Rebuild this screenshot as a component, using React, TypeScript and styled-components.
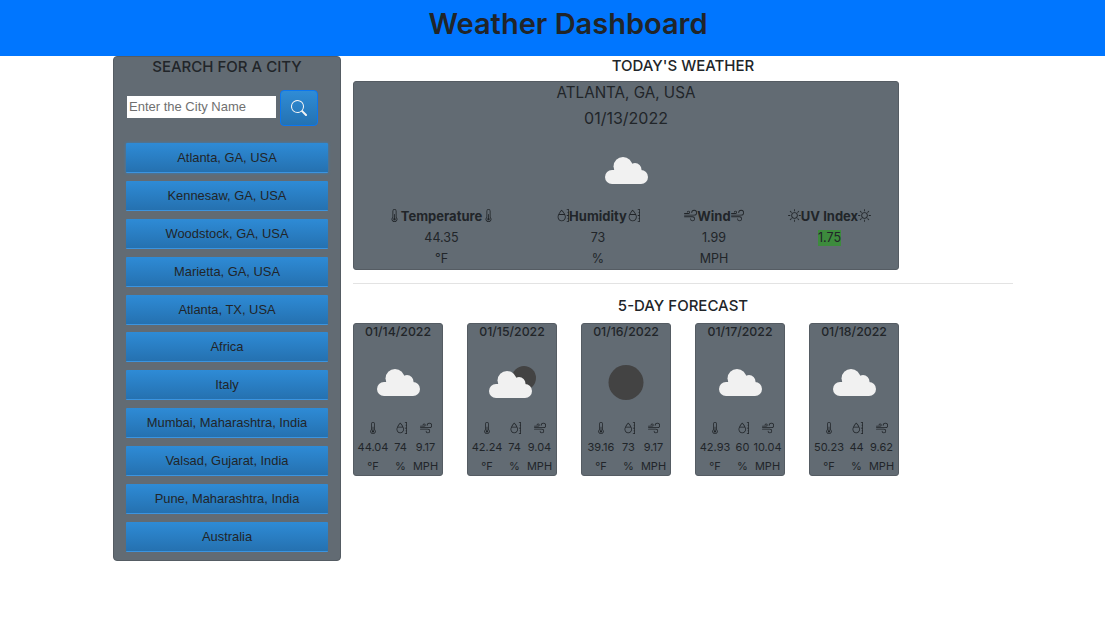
import styled, { createGlobalStyle } from "styled-components";
import {
  BsSearch,
  BsThermometerHalf,
  BsMoisture,
  BsWind,
  BsSun,
} from "react-icons/bs";

const GlobalStyle = createGlobalStyle`
  * { box-sizing: border-box; }
  html, body { margin: 0; padding: 0; background: #fff; }
  body {
    font-family: Inter, "Liberation Sans", sans-serif;
    color: #212529;
  }
`;

const cities = [
  "Atlanta, GA, USA",
  "Kennesaw, GA, USA",
  "Woodstock, GA, USA",
  "Marietta, GA, USA",
  "Atlanta, TX, USA",
  "Africa",
  "Italy",
  "Mumbai, Maharashtra, India",
  "Valsad, Gujarat, India",
  "Pune, Maharashtra, India",
  "Australia",
];

type Sky = "cloud" | "partly" | "night";

interface iDay {
  date: string;
  temp: string;
  humidity: string;
  wind: string;
  sky: Sky;
}

const days: iDay[] = [
  { date: "01/14/2022", temp: "44.04", humidity: "74", wind: "9.17", sky: "cloud" },
  { date: "01/15/2022", temp: "42.24", humidity: "74", wind: "9.04", sky: "partly" },
  { date: "01/16/2022", temp: "39.16", humidity: "73", wind: "9.17", sky: "night" },
  { date: "01/17/2022", temp: "42.93", humidity: "60", wind: "10.04", sky: "cloud" },
  { date: "01/18/2022", temp: "50.23", humidity: "44", wind: "9.62", sky: "cloud" },
];

const Cloud = ({ x, y }: { x: number; y: number }) => (
  <g transform={`translate(${x} ${y})`} fill="#f1f1f1">
    <circle cx="18" cy="9.500" r="9.500" />
    <circle cx="30" cy="12.500" r="6.500" />
    <circle cx="7" cy="20" r="7" />
    <circle cx="36" cy="20" r="7" />
    <rect x="7" y="13" width="29" height="14" />
  </g>
);

const WeatherIcon = ({ sky }: { sky: Sky }) => (
  <svg width="50" height="50" viewBox="0 0 50 50">
    {sky === "night" && <circle cx="25" cy="24.500" r="17.500" fill="#434343" />}
    {sky === "partly" && <circle cx="37" cy="20" r="12" fill="#434343" />}
    {sky === "partly" && <Cloud x={2} y={13} />}
    {sky === "cloud" && <Cloud x={4} y={11} />}
  </svg>
);

const App = () => {
  return (
    <>
      <GlobalStyle />
      <Header>
        <Title>Weather Dashboard</Title>
      </Header>
      <Page>
        <Sidebar>
          <SideTitle>SEARCH FOR A CITY</SideTitle>
          <SearchRow>
            <SearchInput placeholder="Enter the City Name" />
            <SearchButton aria-label="Search">
              <BsSearch />
            </SearchButton>
          </SearchRow>
          <CityList>
            {cities.map((c, i) => (
              <CityButton key={c} $first={i === 0}>
                {c}
              </CityButton>
            ))}
          </CityList>
        </Sidebar>
        <Main>
          <SectionTitle>TODAY'S WEATHER</SectionTitle>
          <TodayCard>
            <CityName>ATLANTA, GA, USA</CityName>
            <TodayDate>01/13/2022</TodayDate>
            <TodayIcon>
              <WeatherIcon sky="cloud" />
            </TodayIcon>
            <TodayGrid>
              <TodayHead>
                <BsThermometerHalf /> Temperature <BsThermometerHalf />
              </TodayHead>
              <TodayHead>
                <BsMoisture />Humidity<BsMoisture />
              </TodayHead>
              <TodayHead>
                <BsWind />Wind<BsWind />
              </TodayHead>
              <TodayHead>
                <BsSun />UV Index<BsSun />
              </TodayHead>
              <TodayCell>44.35</TodayCell>
              <TodayCell>73</TodayCell>
              <TodayCell>1.99</TodayCell>
              <TodayCell>
                <UvBadge>1.75</UvBadge>
              </TodayCell>
              <TodayCell>°F</TodayCell>
              <TodayCell>%</TodayCell>
              <TodayCell>MPH</TodayCell>
              <TodayCell />
            </TodayGrid>
          </TodayCard>
          <Divider />
          <ForecastTitle>5-DAY FORECAST</ForecastTitle>
          <ForecastRow>
            {days.map((d) => (
              <DayCard key={d.date}>
                <DayDate>{d.date}</DayDate>
                <DayIcon>
                  <WeatherIcon sky={d.sky} />
                </DayIcon>
                <DayGrid>
                  <DayCell><BsThermometerHalf /></DayCell>
                  <DayCell><BsMoisture /></DayCell>
                  <DayCell><BsWind /></DayCell>
                  <DayCell>{d.temp}</DayCell>
                  <DayCell>{d.humidity}</DayCell>
                  <DayCell>{d.wind}</DayCell>
                  <DayCell>°F</DayCell>
                  <DayCell>%</DayCell>
                  <DayCell>MPH</DayCell>
                </DayGrid>
              </DayCard>
            ))}
          </ForecastRow>
        </Main>
      </Page>
    </>
  );
};

export default App;

const Header = styled.header`
  height: 56px;
  background-color: #0076ff;
  display: flex;
  justify-content: center;
  align-items: center;
  padding-left: 31px;
`;
const Title = styled.h1`
  margin: 0 0 8px;
  font-size: 29px;
  font-weight: 600;
  line-height: 38px;
  color: #212529;
`;
const Page = styled.div`
  display: flex;
  align-items: flex-start;
  gap: 12px;
  padding-left: 113px;
`;
const Sidebar = styled.aside`
  width: 228px;
  height: 505px;
  background-color: #626b73;
  border: 1px solid #555c63;
  border-radius: 4px;
  padding: 0 11px;
`;
const SideTitle = styled.div`
  font-size: 15px;
  line-height: 19px;
  font-weight: 500;
  text-align: center;
`;
const SearchRow = styled.div`
  display: flex;
  align-items: center;
  gap: 4px;
  margin: 14px 0 17px 2px;
`;
const SearchInput = styled.input`
  width: 149px;
  height: 22px;
  margin-top: -3px;
  border: 0;
  padding: 0 2px;
  background: #fff;
  font-family: "Liberation Sans", sans-serif;
  font-size: 13px;
  &::placeholder {
    color: #707070;
    opacity: 1;
  }
`;
const SearchButton = styled.button`
  width: 38px;
  height: 36px;
  padding: 0;
  border: 1px solid #0b76f0;
  border-radius: 4px;
  background: linear-gradient(#2f8cd6, #2472b2);
  color: #f4f4f4;
  font-size: 16px;
  display: flex;
  align-items: center;
  justify-content: center;
`;
const CityList = styled.div`
  display: flex;
  flex-direction: column;
  gap: 7.900px;
  padding: 0 1px;
`;
const CityButton = styled.button<{ $first?: boolean }>`
  width: 202px;
  height: 30px;
  padding: 0;
  border: 0;
  border-bottom: 1px solid #3b94e0;
  border-radius: 1px;
  background: linear-gradient(#2e8bd6, #2571b0);
  color: #212529;
  font-family: "Liberation Sans", sans-serif;
  font-size: 12.900px;
  box-shadow: ${(p) => (p.$first ? "0 0 3px #3480c0" : "none")};
`;
const Main = styled.main`
  width: 660px;
`;
const SectionTitle = styled.div`
  width: 660px;
  text-align: center;
  font-size: 15px;
  line-height: 19px;
  font-weight: 500;
  margin-bottom: 6px;
`;
const TodayCard = styled.section`
  width: 546px;
  height: 189px;
  background-color: #626b73;
  border: 1px solid #555c63;
  border-radius: 3px;
  text-align: center;
`;
const CityName = styled.div`
  font-size: 15.200px;
  line-height: 20px;
  padding-top: 1px;
  height: 21px;
`;
const TodayDate = styled.div`
  font-size: 16px;
  line-height: 20px;
  margin-top: 5px;
`;
const TodayIcon = styled.div`
  height: 50px;
  margin-top: 18px;
  display: flex;
  justify-content: center;
`;
const TodayGrid = styled.div`
  display: grid;
  grid-template-columns: 175px 138px 94px 137px;
  grid-auto-rows: 21px;
  margin-top: 9px;
  align-items: center;
`;
const TodayHead = styled.div`
  font-size: 13px;
  font-weight: 700;
  display: flex;
  align-items: center;
  justify-content: center;
  white-space: nowrap;
  svg { font-size: 13px; }
`;
const TodayCell = styled.div`
  font-size: 12.500px;
  line-height: 16px;
  padding-top: 2px;
`;
const UvBadge = styled.span`
  background-color: #3d8b3d;
  display: inline-block;
  line-height: 16px;
`;
const Divider = styled.hr`
  margin: 13px 0 0;
  border: 0;
  border-top: 1px solid #e3e3e3;
`;
const ForecastTitle = styled(SectionTitle)`
  margin-top: 12px;
  margin-bottom: 8px;
`;
const ForecastRow = styled.div`
  display: flex;
  gap: 24px;
`;
const DayCard = styled.article`
  width: 90px;
  height: 153px;
  background-color: #626b73;
  border: 1px solid #555c63;
  border-radius: 3px;
`;
const DayDate = styled.div`
  font-size: 12.300px;
  line-height: 16px;
  text-align: center;
  font-weight: 500;
`;
const DayIcon = styled.div`
  height: 50px;
  margin-top: 18px;
  display: flex;
  justify-content: center;
`;
const DayGrid = styled.div`
  display: grid;
  grid-template-columns: 38px 17px 33px;
  grid-auto-rows: 19px;
  margin-top: 10px;
  align-items: center;
  justify-items: center;
`;
const DayCell = styled.div`
  font-size: 11px;
  line-height: 14px;
  white-space: nowrap;
  display: flex;
  svg { font-size: 12px; }
`;
